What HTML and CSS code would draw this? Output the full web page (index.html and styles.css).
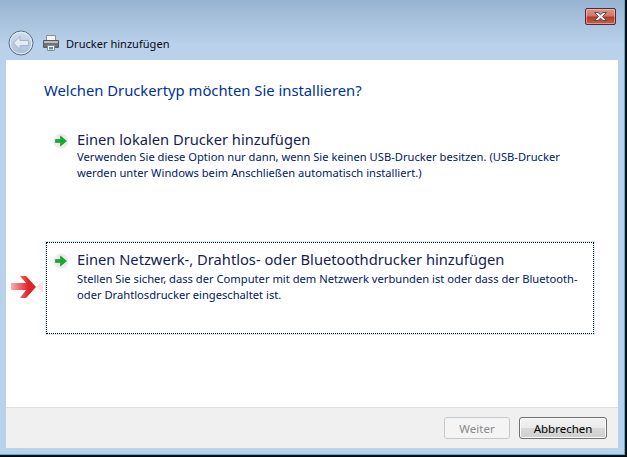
FILE: index.html
```html
<!DOCTYPE html>
<html lang="de">
<head>
<meta charset="utf-8">
<title>Drucker hinzufügen</title>
<link rel="stylesheet" href="styles.css">
</head>
<body>
<div class="window">
  <div class="titlebar">
    <button class="close" aria-label="Schließen">
      <svg width="17" height="11" viewBox="0 0 17 11"><path d="M2.500 1.500h3.500l2.500 2.200 2.500-2.200h3.500l-4 4 4 4h-3.500l-2.500-2.200-2.500 2.200h-3.500l4-4z" fill="#f2f4f6" stroke="#5b4a50" stroke-width="1"/></svg>
    </button>
  </div>
  <div class="navbar">
    <svg class="back" width="26" height="26" viewBox="0 0 26 26">
      <defs><linearGradient id="bk" x1="0" y1="0" x2="0" y2="1"><stop offset="0" stop-color="#d3dfee"/><stop offset="1" stop-color="#a9bcd6"/></linearGradient></defs>
      <circle cx="13" cy="13" r="12" fill="url(#bk)" stroke="#5c6d82"/>
      <circle cx="13" cy="13" r="10.800" fill="none" stroke="#e6edf5"/>
      <path d="M5.500 13l6.500-6.500v4h8.500v5h-8.500v4z" fill="#e4ebf4" stroke="#a3b4ca"/>
    </svg>
    <svg class="printer" width="18" height="18" viewBox="0 0 18 18">
      <path d="M4.500 1.500h9v5h-9z" fill="#f4f4f4" stroke="#8d8d8d"/>
      <path d="M1.500 6.500h15v7h-15z" fill="#6f7378" stroke="#55585c"/>
      <path d="M2 7h14v2h-14z" fill="#b9bcc0"/>
      <path d="M5.500 11.500h7v5h-7z" fill="#fff" stroke="#8b8b8b"/>
      <path d="M7 13h4v2.500h-4z" fill="#3f9fb0"/>
    </svg>
    <span class="navtitle">Drucker hinzufügen</span>
  </div>
  <div class="content">
    <main class="main">
      <h1 class="heading">Welchen Druckertyp möchten Sie installieren?</h1>
      <div class="options">
        <div class="option">
          <svg class="arrow" width="16" height="16" viewBox="0 0 16 16"><circle cx="8" cy="8" r="7.500" fill="#ececec"/><path d="M2.500 6.500h5v-3.500l6 5-6 5v-3.500h-5z" fill="#10ad2e" stroke="#0b8a22" stroke-width=".6"/></svg>
          <div class="option-text">
            <div class="option-title">Einen lokalen Drucker hinzufügen</div>
            <div class="option-desc">Verwenden Sie diese Option nur dann, wenn Sie keinen USB-Drucker besitzen. (USB-Drucker<br>werden unter Windows beim Anschließen automatisch installiert.)</div>
          </div>
        </div>
        <div class="option option-focus">
          <svg class="arrow" width="16" height="16" viewBox="0 0 16 16"><circle cx="8" cy="8" r="7.500" fill="#ececec"/><path d="M2.500 6.500h5v-3.500l6 5-6 5v-3.500h-5z" fill="#10ad2e" stroke="#0b8a22" stroke-width=".6"/></svg>
          <div class="option-text">
            <div class="option-title">Einen Netzwerk-, Drahtlos- oder Bluetoothdrucker hinzufügen</div>
            <div class="option-desc">Stellen Sie sicher, dass der Computer mit dem Netzwerk verbunden ist oder dass der Bluetooth-<br>oder Drahtlosdrucker eingeschaltet ist.</div>
          </div>
          <svg class="red-arrow" width="33" height="24" viewBox="0 0 33 24">
            <defs><linearGradient id="ra" x1="0" y1="0" x2="1" y2="0"><stop offset="0" stop-color="#f6b0b0"/><stop offset=".7" stop-color="#e0222a"/></linearGradient></defs>
            <path d="M9 1h6l10 11-10 11h-6l6-8h-15v-7h15z" fill="url(#ra)"/>
            <path d="M25 12l7-6v12z" fill="#fbe3e3"/>
          </svg>
        </div>
      </div>
    </main>
    <footer class="footer">
      <button class="btn btn-disabled">Weiter</button>
      <button class="btn btn-default">Abbrechen</button>
    </footer>
  </div>
</div>
</body>
</html>
```
FILE: styles.css
```css
html, body {
  margin: 0;
  padding: 0;
  width: 627px;
  height: 457px;
  overflow: hidden;
  background: #000;
}
.window {
  box-sizing: border-box;
  width: 625px;
  height: 455px;
  border-right: 1px solid #14c8ee;
  border-bottom: 1px solid #14c8ee;
  padding: 0 6px 6px 6px;
  display: flex;
  flex-direction: column;
  background: linear-gradient(#98b3d2 0, #b9d1ea 44px, #b9d1ea 100%);
  font-family: "Noto Sans", "Open Sans", sans-serif;
}
.titlebar {
  height: 26px;
  display: flex;
  justify-content: flex-end;
  align-items: flex-start;
  padding: 8px 2px 0 0;
  box-sizing: border-box;
  flex: none;
}
.close {
  width: 31px;
  height: 17px;
  padding: 0;
  border: 1px solid #4e2a3a;
  border-radius: 2px;
  background: linear-gradient(#d9948a 0, #d2766a 45%, #b23a28 55%, #c9604e 100%);
  box-shadow: inset 0 0 0 1px rgba(255, 225, 220, .45);
  display: flex;
  align-items: center;
  justify-content: center;
}
.navbar {
  height: 34px;
  flex: none;
  display: flex;
  align-items: center;
  margin-left: 2px;
}
.back { flex: none; margin-right: 8px; }
.printer { flex: none; margin-right: 6px; }
.navtitle {
  font-size: 11.070px;
  color: #0a0a14;
}
.content {
  flex: 1;
  display: flex;
  flex-direction: column;
  background: #fff;
  min-height: 0;
}
.main {
  flex: 1;
  min-height: 0;
  padding: 20px 24px 0 38px;
  border-bottom: 1px solid #dfdfdf;
}
.heading {
  margin: 0;
  font-size: 14.800px;
  line-height: 20px;
  font-weight: 400;
  color: #003399;
}
.options {
  display: flex;
  flex-direction: column;
  gap: 52px;
  margin-top: 23px;
  margin-left: 2px;
}
.option {
  box-sizing: border-box;
  width: 548px;
  height: 67px;
  display: flex;
  gap: 8px;
  padding: 6px;
  position: relative;
  border: 1px solid transparent;
}
.option-focus {
  height: 92px;
  border: 1px dotted #000;
  box-shadow: 0 0 0 1px #d4eef6;
  padding-top: 7px;
}
.arrow { flex: none; margin-top: 3px; }
.option-title {
  font-size: 14.700px;
  line-height: 19px;
  color: #151c55;
}
.option-focus .option-title { margin-bottom: 2px; }
.option-desc {
  font-size: 11.180px;
  line-height: 16px;
  color: #001a66;
  white-space: nowrap;
}
.red-arrow {
  position: absolute;
  left: -36px;
  top: 32px;
}
.footer {
  height: 40px;
  flex: none;
  box-sizing: border-box;
  background: #f0f0f0;
  display: flex;
  justify-content: flex-end;
  gap: 9px;
  padding: 9px 11px 0 0;
}
.btn {
  height: 22px;
  box-sizing: border-box;
  padding: 0;
  border-radius: 3px;
  font-family: inherit;
  font-size: 11.500px;
}
.btn-disabled {
  width: 66px;
  border: 1px solid #c4c8cc;
  background: #f4f4f4;
  color: #8a8a8a;
}
.btn-default {
  width: 88px;
  border: 1px solid #707070;
  background: linear-gradient(#f2f2f2 0, #ebebeb 48%, #d8d8d8 52%, #cfcfcf 100%);
  box-shadow: inset 0 0 0 1px #fbfbfb;
  color: #000;
}
```
